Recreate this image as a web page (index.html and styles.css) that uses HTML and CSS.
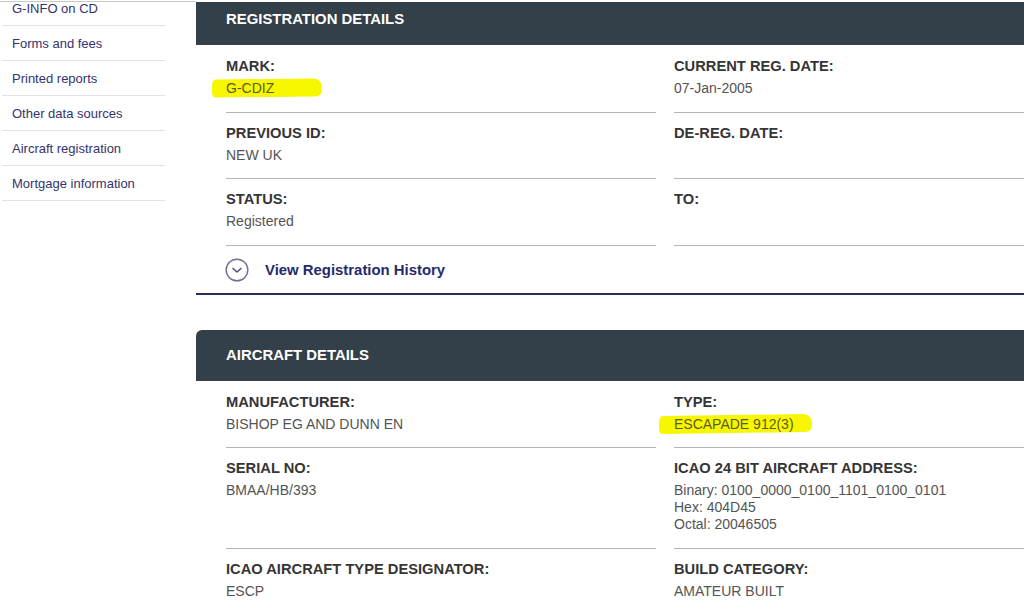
FILE: index.html
```html
<!DOCTYPE html>
<html>
<head>
  <meta charset="UTF-8">
  <title>G-INFO - G-CDIZ</title>
  <link rel="stylesheet" href="styles.css">
</head>
<body>
  <div class="page">
    <!-- Left menu -->
    <aside class="sidebar">
      <ul class="side-nav">
        <li><a href="#">G-INFO on CD</a></li>
        <li><a href="#">Forms and fees</a></li>
        <li><a href="#">Printed reports</a></li>
        <li><a href="#">Other data sources</a></li>
        <li><a href="#">Aircraft registration</a></li>
        <li><a href="#">Mortgage information</a></li>
      </ul>
    </aside>

    <main class="main">
      <!-- Registration -->
      <section class="panel panel-first">
        <h2 class="panel-head">REGISTRATION DETAILS</h2>
        <div class="fields">
          <div class="field">
            <div class="label">MARK:</div>
            <div class="value"><span class="hl hl-mark">G-CDIZ</span></div>
          </div>
          <div class="field">
            <div class="label">CURRENT REG. DATE:</div>
            <div class="value">07-Jan-2005</div>
          </div>
          <div class="field">
            <div class="label">PREVIOUS ID:</div>
            <div class="value">NEW UK</div>
          </div>
          <div class="field">
            <div class="label">DE-REG. DATE:</div>
            <div class="value">&nbsp;</div>
          </div>
          <div class="field">
            <div class="label">STATUS:</div>
            <div class="value">Registered</div>
          </div>
          <div class="field">
            <div class="label">TO:</div>
            <div class="value">&nbsp;</div>
          </div>
        </div>
        <a class="history" href="#">
          <svg class="history-icon" width="24" height="24" viewBox="0 0 24 24">
            <circle cx="12" cy="12" r="10.8" fill="none" stroke="#6e6e98" stroke-width="1.4"/>
            <path d="M8 10.5 L12 14 L16 10.5" fill="none" stroke="#4a4a7a" stroke-width="1.5" stroke-linecap="round" stroke-linejoin="round"/>
          </svg>
          <span>View Registration History</span>
        </a>
      </section>

      <!-- Aircraft -->
      <section class="panel">
        <h2 class="panel-head">AIRCRAFT DETAILS</h2>
        <div class="fields">
          <div class="field">
            <div class="label">MANUFACTURER:</div>
            <div class="value">BISHOP EG AND DUNN EN</div>
          </div>
          <div class="field">
            <div class="label">TYPE:</div>
            <div class="value"><span class="hl hl-type">ESCAPADE 912(3)</span></div>
          </div>
          <div class="field">
            <div class="label">SERIAL NO:</div>
            <div class="value">BMAA/HB/393</div>
          </div>
          <div class="field">
            <div class="label">ICAO 24 BIT AIRCRAFT ADDRESS:</div>
            <div class="value">Binary: 0100_0000_0100_1101_0100_0101<br>Hex: 404D45<br>Octal: 20046505</div>
          </div>
          <div class="field">
            <div class="label">ICAO AIRCRAFT TYPE DESIGNATOR:</div>
            <div class="value">ESCP</div>
          </div>
          <div class="field">
            <div class="label">BUILD CATEGORY:</div>
            <div class="value">AMATEUR BUILT</div>
          </div>
        </div>
      </section>
    </main>
  </div>
</body>
</html>
```

FILE: styles.css
```css
* {
  box-sizing: border-box;
}

html, body {
  margin: 0;
  padding: 0;
  background: #fff;
  font-family: "Liberation Sans", Arial, sans-serif;
  overflow: hidden;
}

.page {
  display: flex;
  padding-top: 1px;
  height: 614px;
}

/* Sidebar */
.sidebar {
  width: 196px;
  flex: none;
  border-top: 1px solid #c8c8c8;
  overflow: hidden;
}

.side-nav {
  list-style: none;
  margin: -11px 0 0 2px;
  padding: 0;
  width: 163px;
}

.side-nav li {
  height: 35px;
  border-bottom: 1px solid #e2e2e2;
  display: flex;
  align-items: center;
}

.side-nav a {
  padding-left: 10px;
  font-size: 13px;
  color: #33336e;
  text-decoration: none;
}

/* Main column */
.main {
  flex: 1;
  min-width: 0;
  margin-top: 1px;
  overflow: hidden;
}

.panel {
  width: 908px;
  border-bottom: 2px solid #2b2c5e;
  margin-bottom: 35px;
}

.panel-first {
  margin-top: -8px;
}

.panel:last-child {
  border-bottom: none;
}

.panel-head {
  margin: 0;
  height: 51px;
  padding: 0 0 1px 30px;
  display: flex;
  align-items: center;
  background: #333f49;
  color: #fff;
  font-size: 14.9px;
  font-weight: bold;
  border-radius: 6px 6px 0 0;
}

.fields {
  display: grid;
  grid-template-columns: 430px 430px;
  column-gap: 18px;
  padding: 1px 0 0 30px;
}

.field {
  padding: 10px 0 14.5px;
  border-bottom: 1px solid #b4b4b4;
}

.label {
  font-size: 14.7px;
  line-height: 20px;
  font-weight: bold;
  color: #353535;
}

.value {
  margin-top: 4px;
  font-size: 14px;
  line-height: 17px;
  color: #545454;
}

/* marker highlight */
.hl {
  position: relative;
  z-index: 0;
  color: #5e5c1c;
}

.hl::before {
  content: "";
  position: absolute;
  z-index: -1;
  top: -1px;
  bottom: -1px;
  background: #f7f700;
  border-radius: 4px 9px 7px 3px / 6px 8px 6px 5px;
}

.hl-mark::before {
  left: -14px;
  right: -48px;
  transform: rotate(-0.6deg);
}

.hl-type::before {
  left: -15px;
  right: -18px;
  transform: rotate(-0.8deg);
}

/* history link */
.history {
  display: flex;
  align-items: center;
  gap: 16px;
  height: 47px;
  padding: 1px 0 0 29px;
  text-decoration: none;
  color: #262a6c;
  font-size: 14.9px;
  font-weight: bold;
}

.history-icon {
  flex: none;
}
```
